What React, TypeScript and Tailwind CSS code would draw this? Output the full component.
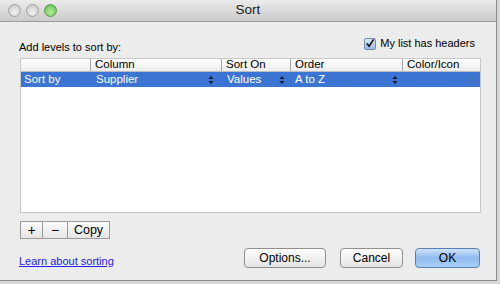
import React from "react";

const Arrows = () => (
  <svg width="6" height="10" viewBox="0 0 6 10" className="shrink-0">
    <path d="M3 1 L5.5 4 L0.5 4 Z" fill="#0d1a33" />
    <path d="M3 9 L5.5 6 L0.5 6 Z" fill="#0d1a33" />
  </svg>
);

const Light = ({ green }: { green?: boolean }) => (
  <div
    className={
      green
        ? "w-[13px] h-[13px] rounded-full border border-[#5a9a4a] bg-[radial-gradient(circle_at_50%_65%,#b6ef9a,#5cb84a)]"
        : "w-[13px] h-[13px] rounded-full border border-[#a0a0a0] bg-[radial-gradient(circle_at_50%_65%,#f2f2f2,#c4c4c4)]"
    }
  />
);

export default function App() {
  return (
    <div
      className="w-[500px] h-[284px] bg-[#d6d6d6] text-[11px] text-black"
      style={{ fontFamily: '"Liberation Sans", Arial, sans-serif' }}
    >
      <div className="w-[497px] h-[281px] bg-[#ececec] border-r border-b border-[#8a8a8a] flex flex-col">
        <div className="h-[22px] shrink-0 flex items-center relative bg-gradient-to-b from-[#ebebeb] to-[#cbcbcb] border-b border-[#9c9c9c]">
          <div className="flex gap-[5px] pl-[8px]">
            <Light />
            <Light />
            <Light green />
          </div>
          <div className="absolute inset-0 flex items-center justify-center text-[13.5px] text-[#222]">Sort</div>
        </div>
        <div className="flex-1 flex flex-col px-[19px]">
          <div className="flex justify-between items-start mt-[15px] h-[21px]">
            <div className="mt-[4px] leading-[13px]">Add levels to sort by:</div>
            <div className="flex items-center gap-[4px] mr-[2px] leading-[13px]">
              <div className="w-[12px] h-[12px] rounded-[2px] border border-[#7a8ba8] bg-gradient-to-b from-[#dce8f8] to-[#9ab8e4] flex items-center justify-center">
                <svg width="11" height="11" viewBox="0 0 11 11">
                  <path d="M2 5.5 L4.5 8.5 L9.5 1" stroke="#111" strokeWidth="1.8" fill="none" />
                </svg>
              </div>
              <span>My list has headers</span>
            </div>
          </div>
          <div className="ml-[1px] w-[461px] h-[155px] bg-white border border-[#c8c8c8] flex flex-col">
            <div className="h-[13px] flex items-center border-b border-[#bdbdbd] bg-gradient-to-b from-white to-[#ececec] text-[11.5px]">
              <div className="w-[69px] h-full" />
              <div className="w-[131px] h-full border-l border-[#a8a8a8] pl-[4px] flex items-center">Column</div>
              <div className="w-[69px] h-full border-l border-[#a8a8a8] pl-[4px] flex items-center">Sort On</div>
              <div className="w-[112px] h-full border-l border-[#a8a8a8] pl-[4px] flex items-center">Order</div>
              <div className="flex-1 h-full border-l border-[#a8a8a8] pl-[4px] flex items-center">Color/Icon</div>
            </div>
            <div className="h-[15px] bg-[#3b74d3] text-white flex items-center text-[11.5px]">
              <div className="w-[69px] pl-[3px]">Sort by</div>
              <div className="w-[131px] pl-[6px] pr-[7px] flex items-center justify-between">
                <span>Supplier</span>
                <Arrows />
              </div>
              <div className="w-[69px] pl-[6px] pr-[5px] flex items-center justify-between">
                <span>Values</span>
                <Arrows />
              </div>
              <div className="w-[112px] pl-[5px] pr-[4px] flex items-center justify-between">
                <span>A to Z</span>
                <Arrows />
              </div>
              <div className="flex-1 pr-[5px] flex items-center justify-end">
                <svg width="6" height="10" viewBox="0 0 6 10">
                  <path d="M3 1 L5.5 4 L0.5 4 Z" fill="#4d6fa6" />
                  <path d="M3 9 L5.5 6 L0.5 6 Z" fill="#4d6fa6" />
                </svg>
              </div>
            </div>
          </div>
          <div className="flex mt-[8px] ml-[1px] h-[18px]">
            <div className="w-[23px] border border-[#9a9a9a] bg-gradient-to-b from-[#fbfbfb] to-[#e6e6e6] flex items-center justify-center text-[14px] leading-none">+</div>
            <div className="w-[25px] border-y border-r border-[#9a9a9a] bg-gradient-to-b from-[#fbfbfb] to-[#e6e6e6] flex items-center justify-center text-[14px] leading-none">−</div>
            <div className="w-[42px] border-y border-r border-[#9a9a9a] bg-gradient-to-b from-[#fbfbfb] to-[#e6e6e6] flex items-center justify-center text-[12.5px]">Copy</div>
          </div>
          <div className="flex items-center mt-[9px] h-[20px]">
            <a className="text-[#2222ee] underline mt-[6px]" href="#">Learn about sorting</a>
            <div className="flex-1" />
            <div className="w-[82px] h-[20px] rounded-[4px] border border-[#8f8f8f] bg-gradient-to-b from-white to-[#e4e4e4] flex items-center justify-center text-[12px]">Options...</div>
            <div className="w-[63px] h-[20px] ml-[14px] rounded-[4px] border border-[#8f8f8f] bg-gradient-to-b from-white to-[#e4e4e4] flex items-center justify-center text-[12px]">Cancel</div>
            <div className="w-[65px] h-[20px] ml-[12px] mr-[-3px] rounded-[4px] border border-[#5a7fb8] bg-gradient-to-b from-[#cfe3fb] via-[#8fbbef] to-[#a8d0fa] flex items-center justify-center text-[12px]">OK</div>
          </div>
        </div>
      </div>
    </div>
  );
}
